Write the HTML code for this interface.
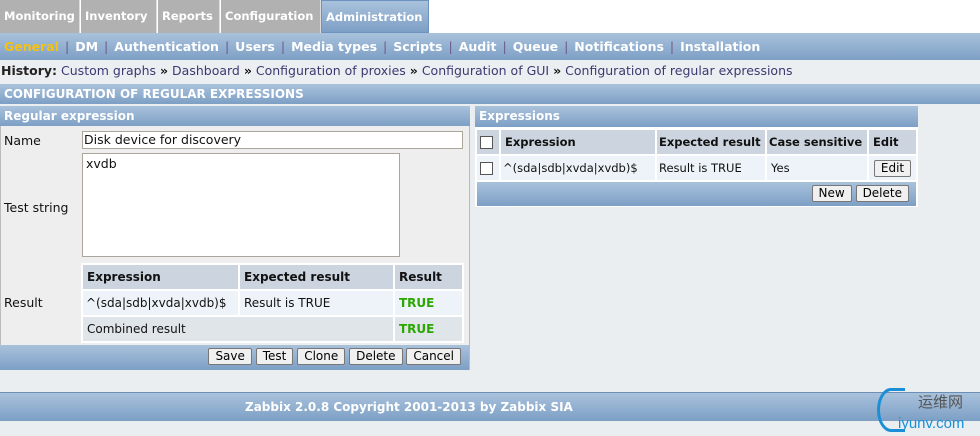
<!DOCTYPE html>
<html><head><style>
*{box-sizing:border-box;margin:0;padding:0}
body{width:980px;height:436px;background:#eaeef1;font-family:"DejaVu Sans","Liberation Sans",sans-serif;font-size:12px;color:#111;position:relative;overflow:hidden}
.a{position:absolute}
.blue{background:linear-gradient(#a9c2dc,#7d9fc5);color:#fff;font-weight:bold}
.tab{position:absolute;top:0;height:33px;background:#b1b1b1;color:#fff;font-weight:bold;font-size:11.5px;line-height:33px;padding-left:4px;border-right:1px solid #ddd;white-space:nowrap;overflow:hidden}
.sep{color:#6c5a8a;font-weight:normal;margin:0 6px}
.hd{position:absolute;height:20px;line-height:20px;padding-left:4px;font-size:12px}
td{padding:0 4px;height:24px;white-space:nowrap}
.th{background:#ccd5df;font-weight:bold}
.btn{display:inline-block;background:#f0f0f0;border:1px solid #777;border-radius:2px;font-size:12px;line-height:15px;padding:0 6px;color:#000;font-weight:normal}
.t{color:#2aa700;font-weight:bold}
.cb{display:inline-block;width:13px;height:13px;border:1px solid #555;background:#fff;vertical-align:middle}
</style></head><body>
<div class="a" style="left:0;top:0;width:980px;height:33px;background:#fff"></div>
<div class="tab" style="left:0;width:80px">Monitoring</div>
<div class="tab" style="left:81px;width:76px">Inventory</div>
<div class="tab" style="left:158px;width:62px">Reports</div>
<div class="tab" style="left:221px;width:100px">Configuration</div>
<div class="tab" style="left:321px;width:108px;background:linear-gradient(#a9c2dc,#7d9fc5);border:1px solid #6c92bd">Administration</div>
<div class="a blue" style="left:0;top:33px;width:980px;height:27px;line-height:27px;padding-left:4px;font-size:12.5px;white-space:nowrap"><span style="color:#f5c211">General</span><i class="sep">|</i>DM<i class="sep">|</i>Authentication<i class="sep">|</i>Users<i class="sep">|</i>Media types<i class="sep">|</i>Scripts<i class="sep">|</i>Audit<i class="sep">|</i>Queue<i class="sep">|</i>Notifications<i class="sep">|</i>Installation</div>
<div class="a" style="left:0;top:60px;width:980px;height:22px;line-height:22px;padding-left:1px;font-size:12.5px;color:#3a3a70;white-space:nowrap;background:#eceff2"><b style="color:#222">History:</b> Custom graphs <b style="color:#111">»</b> Dashboard <b style="color:#111">»</b> Configuration of proxies <b style="color:#111">»</b> Configuration of GUI <b style="color:#111">»</b> Configuration of regular expressions</div>
<div class="hd blue" style="left:0;top:84px;width:980px">CONFIGURATION OF REGULAR EXPRESSIONS</div>
<div class="a" style="left:0;top:106px;width:470px;height:264px;background:#eeeeee;border:1px solid #bbb"></div>
<div class="hd blue" style="left:0;top:106px;width:470px">Regular expression</div>
<div class="a" style="left:4px;top:133px;font-size:12.5px">Name</div>
<div class="a" style="left:82px;top:131px;width:381px;height:18px;background:#fff;border:1px solid #aaa69a;padding-left:1px;line-height:16px;font-size:12.5px">Disk device for discovery</div>
<div class="a" style="left:4px;top:200px;font-size:12.5px">Test string</div>
<div class="a" style="left:82px;top:153px;width:318px;height:104px;background:#fff;border:1px solid #aaa69a;padding:2px 3px;font-size:12.5px">xvdb</div>
<div class="a" style="left:4px;top:295px;font-size:12.5px">Result</div>
<table class="a" style="left:81px;top:263px;width:383px;border-spacing:2px;background:#fff;font-size:12px">
<tr><td class="th" style="width:155px">Expression</td><td class="th" style="width:153px">Expected result</td><td class="th">Result</td></tr>
<tr style="background:#edf3f8"><td style="padding:0 3px">^(sda|sdb|xvda|xvdb)$</td><td>Result is TRUE</td><td class="t">TRUE</td></tr>
<tr style="background:#e0e5ea"><td colspan="2">Combined result</td><td class="t">TRUE</td></tr>
</table>
<div class="a blue" style="left:0;top:345px;width:469px;height:25px;text-align:right;padding:3px 8px 0 0;font-weight:normal"><span class="btn">Save</span> <span class="btn">Test</span> <span class="btn">Clone</span> <span class="btn">Delete</span> <span class="btn">Cancel</span></div>
<div class="a" style="left:475px;top:106px;width:443px;height:101px;background:#fff"></div>
<div class="hd blue" style="left:475px;top:106px;width:443px;height:21px">Expressions</div>
<table class="a" style="left:475px;top:128px;width:443px;border-spacing:2px;font-size:11.5px;table-layout:fixed">
<col style="width:22px"><col style="width:154px"><col style="width:108px"><col style="width:100px"><col>
<tr><td class="th" style="padding:0 3px"><span class="cb"></span></td><td class="th">Expression</td><td class="th" style="padding:0 2px">Expected result</td><td class="th" style="padding:0 2px">Case sensitive</td><td class="th">Edit</td></tr>
<tr style="background:#edf3f8"><td style="padding:0 3px"><span class="cb"></span></td><td style="padding:0 2px">^(sda|sdb|xvda|xvdb)$</td><td style="padding:0 2px">Result is TRUE</td><td>Yes</td><td style="text-align:center"><span class="btn">Edit</span></td></tr>
</table>
<div class="a blue" style="left:477px;top:182px;width:439px;height:24px;text-align:right;padding:3px 7px 0 0;font-weight:normal"><span class="btn">New</span> <span class="btn">Delete</span></div>
<div class="a blue" style="left:0;top:392px;width:980px;height:29px;line-height:29px;padding-left:245px;font-size:12px;border-top:1px solid #6d8fb5">Zabbix 2.0.8 Copyright 2001-2013 by Zabbix SIA</div>
<div class="a" style="left:877px;top:388px;width:28px;height:44px;border:3px solid #1a8fd6;border-right:none;border-radius:50% 0 0 50%"></div>
<div class="a" style="left:918px;top:391px;font-size:15px;color:#555;font-family:'Noto Sans CJK SC',sans-serif">运维网</div>
<div class="a" style="left:898px;top:415px;font-size:15px;color:#1a8fd6;font-family:'Liberation Sans',sans-serif">iyunv.com</div>
</body></html>
